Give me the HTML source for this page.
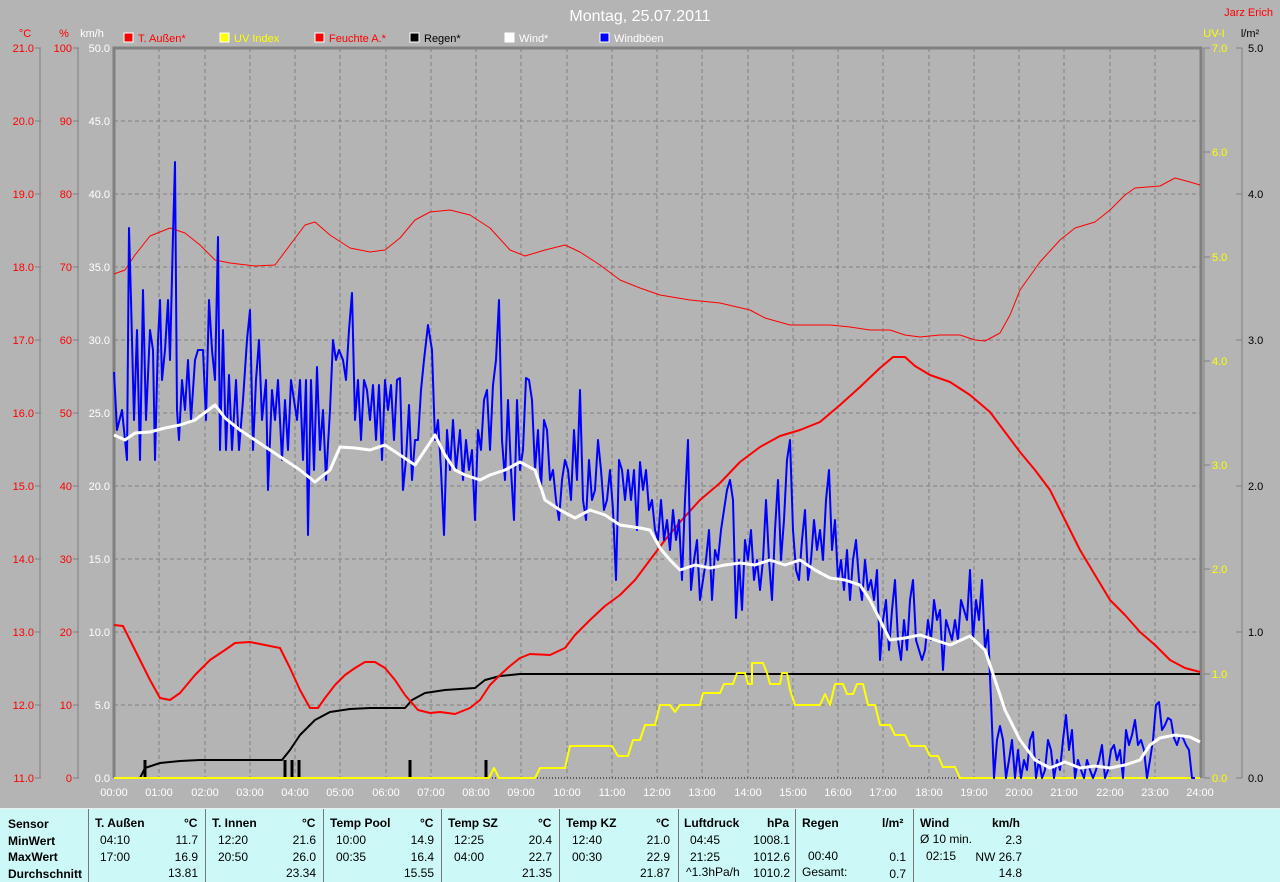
<!DOCTYPE html>
<html><head><meta charset="utf-8"><style>
body{margin:0;width:1280px;height:881px;background:#b4b4b4;overflow:hidden;font-family:"Liberation Sans",sans-serif}
svg{position:absolute;left:0;top:0}
.tb{position:absolute;left:0;top:808px;width:1280px;height:73px;background:#ccf9f7;border-top:1px solid #eee;font-size:12px;color:#000}
.tb div{position:absolute}
.b{font-weight:bold}
.v{position:absolute;top:0;width:1px;height:73px;background:#777}
</style></head><body>
<svg width="1280" height="808" xmlns="http://www.w3.org/2000/svg" font-family="Liberation Sans, sans-serif" font-size="11">
<g stroke="#808080" stroke-dasharray="4,3" stroke-width="1">
<line x1="159" y1="48" x2="159" y2="778"/><line x1="205" y1="48" x2="205" y2="778"/><line x1="250" y1="48" x2="250" y2="778"/><line x1="295" y1="48" x2="295" y2="778"/><line x1="340" y1="48" x2="340" y2="778"/><line x1="386" y1="48" x2="386" y2="778"/><line x1="431" y1="48" x2="431" y2="778"/><line x1="476" y1="48" x2="476" y2="778"/><line x1="521" y1="48" x2="521" y2="778"/><line x1="567" y1="48" x2="567" y2="778"/><line x1="612" y1="48" x2="612" y2="778"/><line x1="657" y1="48" x2="657" y2="778"/><line x1="702" y1="48" x2="702" y2="778"/><line x1="748" y1="48" x2="748" y2="778"/><line x1="793" y1="48" x2="793" y2="778"/><line x1="838" y1="48" x2="838" y2="778"/><line x1="883" y1="48" x2="883" y2="778"/><line x1="929" y1="48" x2="929" y2="778"/><line x1="974" y1="48" x2="974" y2="778"/><line x1="1019" y1="48" x2="1019" y2="778"/><line x1="1064" y1="48" x2="1064" y2="778"/><line x1="1110" y1="48" x2="1110" y2="778"/><line x1="1155" y1="48" x2="1155" y2="778"/>
<line x1="114" y1="121" x2="1200" y2="121"/><line x1="114" y1="194" x2="1200" y2="194"/><line x1="114" y1="267" x2="1200" y2="267"/><line x1="114" y1="340" x2="1200" y2="340"/><line x1="114" y1="413" x2="1200" y2="413"/><line x1="114" y1="486" x2="1200" y2="486"/><line x1="114" y1="559" x2="1200" y2="559"/><line x1="114" y1="632" x2="1200" y2="632"/><line x1="114" y1="705" x2="1200" y2="705"/>
</g>
<g stroke="#808080" fill="none">
<path d="M114 778V48H1201V778" stroke-width="3"/>
<line x1="1204" y1="48" x2="1204" y2="778" stroke-width="1"/>
<line x1="40" y1="48" x2="40" y2="778"/><line x1="78" y1="48" x2="78" y2="778"/><line x1="1242" y1="48" x2="1242" y2="778"/>
<path d="M35 48h6M35 121h6M35 194h6M35 267h6M35 340h6M35 413h6M35 486h6M35 559h6M35 632h6M35 705h6M35 778h6"/>
<path d="M73 48h6M73 121h6M73 194h6M73 267h6M73 340h6M73 413h6M73 486h6M73 559h6M73 632h6M73 705h6M73 778h6"/>
<path d="M1204 48h6M1204 152h6M1204 257h6M1204 361h6M1204 465h6M1204 569h6M1204 674h6M1204 778h6"/>
<path d="M1236 48h6M1236 194h6M1236 340h6M1236 486h6M1236 632h6M1236 778h6"/>
</g>
<line x1="114" y1="778" x2="1200" y2="778" stroke="#000" stroke-width="1" stroke-dasharray="1,2"/>
<text x="640" y="21" fill="#fff" font-size="16" text-anchor="middle">Montag, 25.07.2011</text>
<text x="1273" y="16" fill="#f00" text-anchor="end">Jarz Erich</text>
<text x="25" y="37" fill="#f00" text-anchor="middle">°C</text><text x="64" y="37" fill="#f00" text-anchor="middle">%</text><text x="92" y="37" fill="#fff" text-anchor="middle">km/h</text>
<text x="1214" y="37" fill="#ff0" text-anchor="middle">UV-I</text><text x="1250" y="37" fill="#000" text-anchor="middle">l/m²</text>
<rect x="124" y="33" width="9" height="9" fill="#f00" stroke="#fff"/><text x="138" y="42" fill="#f00">T. Außen*</text>
<rect x="220" y="33" width="9" height="9" fill="#ff0" stroke="#fff"/><text x="234" y="42" fill="#ff0">UV Index</text>
<rect x="315" y="33" width="9" height="9" fill="#f00" stroke="#fff"/><text x="329" y="42" fill="#f00">Feuchte A.*</text>
<rect x="410" y="33" width="9" height="9" fill="#000" stroke="#fff"/><text x="424" y="42" fill="#000">Regen*</text>
<rect x="505" y="33" width="9" height="9" fill="#fff" stroke="#fff"/><text x="519" y="42" fill="#fff">Wind*</text>
<rect x="600" y="33" width="9" height="9" fill="#00f" stroke="#fff"/><text x="614" y="42" fill="#fff">Windböen</text>
<g fill="#f00" text-anchor="end"><text x="34" y="52">21.0</text><text x="34" y="125">20.0</text><text x="34" y="198">19.0</text><text x="34" y="271">18.0</text><text x="34" y="344">17.0</text><text x="34" y="417">16.0</text><text x="34" y="490">15.0</text><text x="34" y="563">14.0</text><text x="34" y="636">13.0</text><text x="34" y="709">12.0</text><text x="34" y="782">11.0</text>
<text x="72" y="52">100</text><text x="72" y="125">90</text><text x="72" y="198">80</text><text x="72" y="271">70</text><text x="72" y="344">60</text><text x="72" y="417">50</text><text x="72" y="490">40</text><text x="72" y="563">30</text><text x="72" y="636">20</text><text x="72" y="709">10</text><text x="72" y="782">0</text></g>
<g fill="#fff" text-anchor="end"><text x="110" y="52">50.0</text><text x="110" y="125">45.0</text><text x="110" y="198">40.0</text><text x="110" y="271">35.0</text><text x="110" y="344">30.0</text><text x="110" y="417">25.0</text><text x="110" y="490">20.0</text><text x="110" y="563">15.0</text><text x="110" y="636">10.0</text><text x="110" y="709">5.0</text><text x="110" y="782">0.0</text></g>
<g fill="#ff0"><text x="1212" y="52">7.0</text><text x="1212" y="156">6.0</text><text x="1212" y="261">5.0</text><text x="1212" y="365">4.0</text><text x="1212" y="469">3.0</text><text x="1212" y="573">2.0</text><text x="1212" y="678">1.0</text><text x="1212" y="782">0.0</text></g>
<g fill="#000"><text x="1248" y="52">5.0</text><text x="1248" y="198">4.0</text><text x="1248" y="344">3.0</text><text x="1248" y="490">2.0</text><text x="1248" y="636">1.0</text><text x="1248" y="782">0.0</text></g>
<g fill="#fff" text-anchor="middle"><text x="114" y="796">00:00</text><text x="159" y="796">01:00</text><text x="205" y="796">02:00</text><text x="250" y="796">03:00</text><text x="295" y="796">04:00</text><text x="340" y="796">05:00</text><text x="386" y="796">06:00</text><text x="431" y="796">07:00</text><text x="476" y="796">08:00</text><text x="521" y="796">09:00</text><text x="567" y="796">10:00</text><text x="612" y="796">11:00</text><text x="657" y="796">12:00</text><text x="702" y="796">13:00</text><text x="748" y="796">14:00</text><text x="793" y="796">15:00</text><text x="838" y="796">16:00</text><text x="883" y="796">17:00</text><text x="929" y="796">18:00</text><text x="974" y="796">19:00</text><text x="1019" y="796">20:00</text><text x="1064" y="796">21:00</text><text x="1110" y="796">22:00</text><text x="1155" y="796">23:00</text><text x="1200" y="796">24:00</text></g>
<g fill="none" stroke-linejoin="round">
<polyline stroke="#f00" stroke-width="1" points="114,274 125,270 135,255 150,236 170,228 185,233 200,245 215,260 230,263 255,266 275,265 290,245 305,225 315,222 330,235 350,248 370,252 385,250 400,238 415,220 430,212 450,210 470,215 490,228 510,250 525,256 545,250 565,245 580,252 600,265 620,280 640,288 660,295 690,300 720,303 750,310 765,318 790,325 810,325 830,325 850,327 870,330 890,330 905,335 920,337 940,335 960,335 975,340 985,341 1000,333 1010,315 1020,290 1040,262 1060,240 1075,228 1095,222 1110,210 1125,195 1135,188 1160,186 1175,178 1190,182 1200,185"/>
<polyline stroke="#000" stroke-width="2" points="140,778 145,768 160,763 180,761 200,760 282,760 290,750 300,735 315,720 330,712 350,709 370,708 405,708 412,700 425,693 445,690 475,688 485,680 500,676 520,674 1200,674"/>
<path stroke="#000" stroke-width="3" d="M145 778V760M285 778V760M292 778V760M299 778V760M410 778V760M486 778V760"/>
<polyline stroke="#ff0" stroke-width="2" points="114,778 489,778 494,768 499,778 535,778 540,768 565,768 570,746 612,746 618,756 628,756 633,740 640,740 645,725 655,725 660,705 670,705 675,712 680,705 700,705 703,693 720,693 724,684 733,684 737,673 745,673 748,684 752,684 752,663 763,663 767,673 770,684 780,684 782,673 787,673 790,690 795,705 820,705 825,694 830,705 835,684 843,684 847,694 853,694 857,684 863,684 868,705 875,705 880,725 890,725 895,735 905,735 910,746 925,746 930,756 938,756 943,767 955,767 960,778 1200,778"/>
<polyline stroke="#f00" stroke-width="2" points="114,625 123,626 130,640 140,660 150,680 160,698 170,700 180,693 195,675 210,660 225,650 235,643 250,642 265,645 280,648 290,668 300,690 310,708 318,708 325,698 335,685 345,675 355,668 365,662 375,662 385,668 395,680 405,695 418,710 430,713 440,712 455,714 470,708 480,700 490,685 500,675 510,666 520,658 530,654 550,655 565,648 575,635 590,620 605,606 620,595 635,580 650,560 665,540 680,522 700,500 720,483 740,462 760,447 780,436 800,430 820,422 840,405 860,387 880,368 893,357 905,357 915,366 930,375 950,382 970,395 990,412 1005,432 1020,452 1035,470 1050,490 1065,520 1080,550 1095,575 1110,600 1125,615 1140,632 1155,645 1170,660 1185,668 1200,672"/>
<polyline stroke="#00f" stroke-width="2" points="114,372 117,430 122,410 127,460 129,228 131,300 134,420 137,330 140,460 143,290 146,420 150,330 153,350 155,460 158,340 160,300 162,380 165,350 168,300 170,360 173,235 175,162 177,410 179,440 182,380 185,410 188,360 191,420 195,360 198,350 203,350 206,420 209,300 212,350 215,380 218,237 220,450 223,330 226,450 229,375 232,450 236,380 239,450 243,400 247,340 250,310 253,450 256,380 259,340 262,420 266,380 268,490 272,390 275,420 278,380 282,460 285,400 288,450 291,380 294,400 297,420 300,380 303,460 306,380 308,535 311,380 314,470 317,367 320,450 323,410 326,480 330,410 333,340 336,360 339,350 343,360 346,380 349,330 352,293 355,420 358,380 361,440 364,380 367,390 370,420 373,385 376,440 379,385 382,460 385,380 388,410 391,385 394,440 397,380 400,378 403,490 406,460 409,405 412,480 415,440 418,440 421,390 424,360 428,325 432,350 435,440 438,420 441,470 444,535 447,430 450,470 453,420 456,470 460,430 463,480 466,440 469,470 472,450 475,520 478,430 481,450 484,400 487,390 490,450 493,385 496,360 499,300 502,440 505,480 508,400 511,470 514,520 517,400 520,470 523,450 526,378 529,380 532,400 535,470 538,430 541,490 544,420 547,430 550,480 553,470 556,500 559,520 562,480 565,460 568,470 571,500 574,430 577,480 580,390 583,500 586,520 589,460 592,500 595,490 598,440 601,470 604,510 607,500 610,470 613,510 616,580 619,460 622,470 625,500 628,470 631,500 634,470 637,530 640,462 643,490 646,470 649,510 652,500 655,530 658,540 661,500 664,540 667,520 670,550 673,510 676,540 679,520 682,580 685,500 688,440 691,590 694,560 697,540 700,600 703,580 706,560 709,530 712,600 715,550 718,560 721,530 724,510 727,490 730,480 733,500 736,618 739,560 742,610 745,540 748,560 751,530 754,580 757,560 760,590 763,560 766,500 769,560 772,600 775,530 778,480 781,560 784,520 787,460 790,440 793,530 796,570 799,580 802,540 805,510 808,580 811,560 814,520 817,550 820,530 823,560 826,500 829,470 832,550 835,520 838,580 841,560 844,590 847,550 850,600 853,560 856,540 859,580 862,600 865,560 868,590 871,580 874,600 877,570 880,660 883,620 886,600 889,650 892,610 895,580 898,640 901,660 904,620 907,650 910,600 913,580 916,640 919,650 922,660 925,650 928,620 931,640 934,600 937,620 940,610 943,670 946,620 949,630 952,640 955,620 958,640 961,600 964,610 967,620 970,570 973,640 976,600 979,620 982,580 985,650 988,630 991,700 994,778 997,740 1000,726 1003,740 1006,778 1009,760 1012,740 1015,778 1018,750 1021,778 1024,760 1027,770 1030,740 1033,732 1036,778 1039,760 1042,778 1045,770 1048,740 1051,750 1054,778 1057,760 1060,770 1063,740 1066,715 1069,750 1072,730 1075,778 1078,760 1081,770 1084,778 1087,760 1090,770 1093,778 1096,770 1099,760 1102,745 1105,778 1108,770 1111,750 1114,745 1117,760 1120,750 1123,778 1126,730 1129,745 1132,735 1135,720 1138,745 1141,740 1144,750 1147,778 1150,760 1153,740 1156,705 1159,702 1162,730 1165,725 1168,718 1171,720 1174,738 1177,745 1180,735 1183,738 1186,745 1189,750 1192,778 1195,778"/>
<polyline stroke="#fff" stroke-width="3" points="114,435 125,440 135,433 150,432 165,428 180,425 195,420 215,405 225,418 240,430 255,440 270,450 285,460 300,470 315,482 330,470 340,447 355,448 370,450 385,445 400,455 415,465 425,450 435,435 445,455 455,470 465,475 480,480 490,475 505,470 520,462 535,470 545,500 560,510 575,518 590,510 605,515 620,525 640,528 650,530 660,548 670,560 680,570 695,565 710,568 725,565 740,563 755,565 770,560 785,565 800,560 815,570 830,578 845,580 860,585 870,600 880,620 890,640 905,638 920,635 935,640 950,645 970,636 985,650 995,680 1005,710 1020,740 1035,760 1050,768 1065,762 1080,768 1095,766 1110,768 1125,765 1140,760 1150,745 1160,738 1175,735 1190,737 1200,742"/>
</g>
</svg>
<div class="tb">
<div class="v" style="left:88px"></div><div class="v" style="left:205px"></div><div class="v" style="left:323px"></div><div class="v" style="left:441px"></div><div class="v" style="left:559px"></div><div class="v" style="left:678px"></div><div class="v" style="left:795px"></div><div class="v" style="left:913px"></div>
<div class="b" style="left:8px;top:7px;line-height:16.5px">Sensor<br>MinWert<br>MaxWert<br>Durchschnitt</div>
<div class="b" style="left:95px;top:7px">T. Außen</div><div class="b" style="left:184px;top:7px">°C</div>
<div style="left:100px;top:23px;line-height:16.5px">04:10<br>17:00</div><div style="left:160px;width:38px;text-align:right;top:23px;line-height:16.5px">11.7<br>16.9<br>13.81</div>
<div class="b" style="left:212px;top:7px">T. Innen</div><div class="b" style="left:302px;top:7px">°C</div>
<div style="left:218px;top:23px;line-height:16.5px">12:20<br>20:50</div><div style="left:278px;width:38px;text-align:right;top:23px;line-height:16.5px">21.6<br>26.0<br>23.34</div>
<div class="b" style="left:330px;top:7px">Temp Pool</div><div class="b" style="left:420px;top:7px">°C</div>
<div style="left:336px;top:23px;line-height:16.5px">10:00<br>00:35</div><div style="left:396px;width:38px;text-align:right;top:23px;line-height:16.5px">14.9<br>16.4<br>15.55</div>
<div class="b" style="left:448px;top:7px">Temp SZ</div><div class="b" style="left:538px;top:7px">°C</div>
<div style="left:454px;top:23px;line-height:16.5px">12:25<br>04:00</div><div style="left:514px;width:38px;text-align:right;top:23px;line-height:16.5px">20.4<br>22.7<br>21.35</div>
<div class="b" style="left:566px;top:7px">Temp KZ</div><div class="b" style="left:656px;top:7px">°C</div>
<div style="left:572px;top:23px;line-height:16.5px">12:40<br>00:30</div><div style="left:632px;width:38px;text-align:right;top:23px;line-height:16.5px">21.0<br>22.9<br>21.87</div>
<div class="b" style="left:684px;top:7px">Luftdruck</div><div class="b" style="left:767px;top:7px">hPa</div>
<div style="left:690px;top:23px;line-height:16.5px">04:45<br>21:25</div><div style="left:686px;top:56px">^1.3hPa/h</div><div style="left:742px;width:48px;text-align:right;top:23px;line-height:16.5px">1008.1<br>1012.6<br>1010.2</div>
<div class="b" style="left:802px;top:7px">Regen</div><div class="b" style="left:882px;top:7px">l/m²</div>
<div style="left:808px;top:40px">00:40</div><div style="left:802px;top:56px">Gesamt:</div><div style="left:868px;width:38px;text-align:right;top:40px;line-height:16.5px">0.1<br>0.7</div>
<div class="b" style="left:920px;top:7px">Wind</div><div class="b" style="left:992px;top:7px">km/h</div>
<div style="left:920px;top:23px">Ø 10 min.</div><div style="left:926px;top:40px">02:15</div><div style="left:960px;width:62px;text-align:right;top:23px;line-height:16.5px">2.3<br>NW 26.7<br>14.8</div>
</div>
</body></html>
